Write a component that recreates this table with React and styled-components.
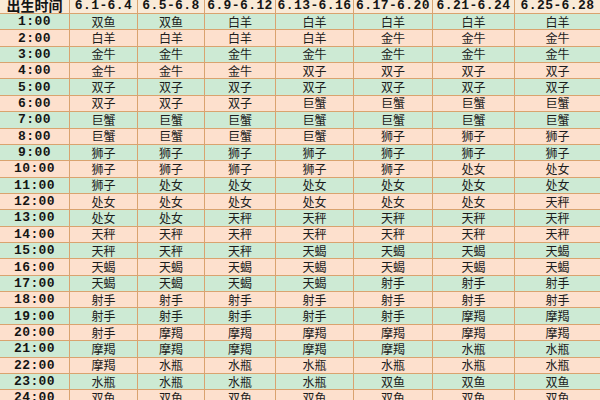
import styled, { createGlobalStyle } from "styled-components";

const GlobalStyle = createGlobalStyle`
	html, body {
		margin: 0;
		padding: 0;
		background: #ffffff;
		overflow: hidden;
	}
`;

const COLS = "70px 68px 67px 71px 78px 79px 82px 85px";

const tones = {
	head: "#f9ead7",
	green: "#cdead4",
	peach: "#fde0cd",
};

const Sheet = styled.div`
	width: 600px;
	height: 400px;
	overflow: hidden;
	font-family: "Noto Sans CJK SC", "Noto Sans", sans-serif;
	color: #1c1c1c;
`;

const Table = styled.div`
	margin-top: -3px;
	display: flex;
	flex-direction: column;
`;

const Row = styled.div`
	display: grid;
	grid-template-columns: ${COLS};
	height: ${(p) => (p.$tone === "head" ? "17px" : "16.36px")};
	box-sizing: border-box;
	border-bottom: 1px solid #d9a36f;
	background-color: ${(p) => tones[p.$tone]};
`;

const Cell = styled.div`
	display: flex;
	align-items: center;
	justify-content: center;
	border-right: 1px solid #d9a36f;
	white-space: nowrap;
	overflow: hidden;
	font-size: 12px;
	line-height: 1;
	&:last-child {
		border-right: none;
	}
`;

const TimeCell = styled(Cell)`
	font-family: "Liberation Mono", "DejaVu Sans Mono", monospace;
	font-weight: 700;
	font-size: 13px;
	letter-spacing: 0.4px;
	color: #151515;
`;

const HeadCell = styled(Cell)`
	font-family: ${(p) =>
		p.$cjk
			? `"Noto Sans CJK SC", sans-serif`
			: `"Liberation Mono", "DejaVu Sans Mono", monospace`};
	font-weight: 700;
	font-size: ${(p) => (p.$cjk ? "14px" : "13px")};
	letter-spacing: ${(p) => (p.$cjk ? "0" : "0.4px")};
	color: #151515;
`;

const headers = [
	"6.1-6.4",
	"6.5-6.8",
	"6.9-6.12",
	"6.13-6.16",
	"6.17-6.20",
	"6.21-6.24",
	"6.25-6.28",
];

const rows = [
	["双鱼", "双鱼", "白羊", "白羊", "白羊", "白羊", "白羊"],
	["白羊", "白羊", "白羊", "白羊", "金牛", "金牛", "金牛"],
	["金牛", "金牛", "金牛", "金牛", "金牛", "金牛", "金牛"],
	["金牛", "金牛", "金牛", "双子", "双子", "双子", "双子"],
	["双子", "双子", "双子", "双子", "双子", "双子", "双子"],
	["双子", "双子", "双子", "巨蟹", "巨蟹", "巨蟹", "巨蟹"],
	["巨蟹", "巨蟹", "巨蟹", "巨蟹", "巨蟹", "巨蟹", "巨蟹"],
	["巨蟹", "巨蟹", "巨蟹", "巨蟹", "狮子", "狮子", "狮子"],
	["狮子", "狮子", "狮子", "狮子", "狮子", "狮子", "狮子"],
	["狮子", "狮子", "狮子", "狮子", "狮子", "处女", "处女"],
	["狮子", "处女", "处女", "处女", "处女", "处女", "处女"],
	["处女", "处女", "处女", "处女", "处女", "处女", "天秤"],
	["处女", "处女", "天秤", "天秤", "天秤", "天秤", "天秤"],
	["天秤", "天秤", "天秤", "天秤", "天秤", "天秤", "天秤"],
	["天秤", "天秤", "天秤", "天蝎", "天蝎", "天蝎", "天蝎"],
	["天蝎", "天蝎", "天蝎", "天蝎", "天蝎", "天蝎", "天蝎"],
	["天蝎", "天蝎", "天蝎", "天蝎", "射手", "射手", "射手"],
	["射手", "射手", "射手", "射手", "射手", "射手", "射手"],
	["射手", "射手", "射手", "射手", "射手", "摩羯", "摩羯"],
	["射手", "摩羯", "摩羯", "摩羯", "摩羯", "摩羯", "摩羯"],
	["摩羯", "摩羯", "摩羯", "摩羯", "摩羯", "水瓶", "水瓶"],
	["摩羯", "水瓶", "水瓶", "水瓶", "水瓶", "水瓶", "水瓶"],
	["水瓶", "水瓶", "水瓶", "水瓶", "双鱼", "双鱼", "双鱼"],
	["双鱼", "双鱼", "双鱼", "双鱼", "双鱼", "双鱼", "双鱼"],
];

export default function App() {
	return (
		<>
			<GlobalStyle />
			<Sheet>
				<Table>
					<Row $tone="head">
						<HeadCell $cjk>出生时间</HeadCell>
						{headers.map((h) => (
							<HeadCell key={h}>{h}</HeadCell>
						))}
					</Row>
					{rows.map((signs, i) => (
						<Row key={i} $tone={i % 2 === 0 ? "green" : "peach"}>
							<TimeCell>{i + 1}:00</TimeCell>
							{signs.map((s, j) => (
								<Cell key={j}>{s}</Cell>
							))}
						</Row>
					))}
				</Table>
			</Sheet>
		</>
	);
}
